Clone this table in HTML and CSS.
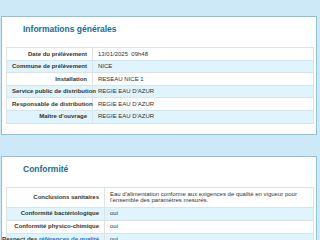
FILE: index.html
```html
<!DOCTYPE html>
<html lang="fr">
<head>
<meta charset="utf-8">
<link rel="stylesheet" href="styles.css">
</head>
<body>
<div class="page">
  <section class="box box-info">
    <h2 class="title">Informations générales</h2>
    <table class="grid">
      <tr><th>Date du prélèvement</th><td>13/01/2025&nbsp; 09h48</td></tr>
      <tr class="alt"><th>Commune de prélèvement</th><td>NICE</td></tr>
      <tr><th>Installation</th><td>RESEAU NICE 1</td></tr>
      <tr class="alt"><th>Service public de distribution</th><td>REGIE EAU D'AZUR</td></tr>
      <tr><th>Responsable de distribution</th><td>REGIE EAU D'AZUR</td></tr>
      <tr class="alt"><th>Maître d'ouvrage</th><td>REGIE EAU D'AZUR</td></tr>
    </table>
  </section>
  <section class="box box-conf">
    <h2 class="title">Conformité</h2>
    <table class="grid">
      <tr class="tall"><th>Conclusions sanitaires</th><td>Eau d'alimentation conforme aux exigences de qualité en vigueur pour l'ensemble des paramètres mesurés.</td></tr>
      <tr class="alt"><th>Conformité bactériologique</th><td>oui</td></tr>
      <tr><th>Conformité physico-chimique</th><td>oui</td></tr>
      <tr class="alt"><th><span class="lbl">Respect des&nbsp;<a class="link">références de qualité</a></span></th><td>oui</td></tr>
    </table>
  </section>
</div>
</body>
</html>
```
FILE: styles.css
```css
html, body {
  margin: 0;
  padding: 0;
  background: #cde9f7;
  font-family: "Liberation Sans", Arial, sans-serif;
}
.page {
  padding: 16px 3px 0 1px;
  overflow: hidden;
  height: 224px;
}
.box {
  background: #fff;
  border: 1px solid #8fc2d4;
  padding: 7px 2px 10px 4px;
  margin-bottom: 21px;
}
.title {
  margin: 0 0 13px 17px;
  font-size: 8.5px;
  line-height: 10px;
  font-weight: bold;
  color: #24698f;
}
.grid {
  width: 100%;
  border-collapse: collapse;
  border: 1px solid #dde2e5;
  font-size: 6px;
  line-height: 6.6px;
  color: #333;
  table-layout: fixed;
}
.grid th, .grid td {
  height: 12.6px;
  padding: 0 5px;
  border-bottom: 1px solid #d6e5eb;
  box-sizing: border-box;
  vertical-align: middle;
}
.grid th {
  font-weight: bold;
  text-align: right;
  border-right: 1px solid #dde2e5;
  white-space: nowrap;
}
.box-info .grid th { width: 86px; }
.box-conf .grid th { width: 98px; }
.box-conf .grid th, .box-conf .grid td { height: 13px; }
.grid td { text-align: left; }
.grid tr.alt th, .grid tr.alt td { background: #dff4fd; }
.grid tr.tall th, .grid tr.tall td { height: 20px; padding-top: 3px; padding-bottom: 3px; }
.lbl {
  display: flex;
  justify-content: flex-end;
  white-space: nowrap;
}
.link { color: #1f6fc4; }
```
